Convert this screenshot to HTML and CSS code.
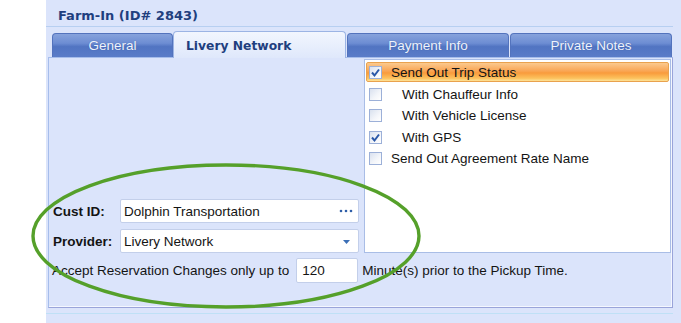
FILE: index.html
```html
<!DOCTYPE html>
<html>
<head>
<meta charset="utf-8">
<link rel="stylesheet" href="styles.css">
</head>
<body>
<div class="frame">
  <div class="title">Farm-In (ID# 2843)</div>
  <div class="tabs">
    <div class="tab tab-general">General</div>
    <div class="tab tab-active">Livery Network</div>
    <div class="tab tab-wide">Payment Info</div>
    <div class="tab tab-wide tab-last">Private Notes</div>
  </div>
  <div class="panel">
    <div class="top">
      <div class="fields">
        <div class="field">
          <span class="label">Cust ID:</span>
          <div class="input">
            <span class="value">Dolphin Transportation</span>
            <svg class="dots" width="14" height="4" viewBox="0 0 14 4"><circle cx="2" cy="2" r="1.3"/><circle cx="7" cy="2" r="1.3"/><circle cx="12" cy="2" r="1.3"/></svg>
          </div>
        </div>
        <div class="field">
          <span class="label">Provider:</span>
          <div class="input">
            <span class="value">Livery Network</span>
            <svg class="arrow" width="7" height="4" viewBox="0 0 7 4"><path d="M0 0H7L3.5 4Z"/></svg>
          </div>
        </div>
      </div>
      <div class="list">
        <div class="row row-sel">
          <span class="cb cb-on"><svg width="11" height="11" viewBox="0 0 11 11"><path d="M2 5.5L4.5 8.5L9 2.5"/></svg></span>
          <span class="txt">Send Out Trip Status</span>
        </div>
        <div class="row">
          <span class="cb"></span>
          <span class="txt indent">With Chauffeur Info</span>
        </div>
        <div class="row">
          <span class="cb"></span>
          <span class="txt indent">With Vehicle License</span>
        </div>
        <div class="row">
          <span class="cb cb-on"><svg width="11" height="11" viewBox="0 0 11 11"><path d="M2 5.5L4.5 8.5L9 2.5"/></svg></span>
          <span class="txt indent">With GPS</span>
        </div>
        <div class="row">
          <span class="cb"></span>
          <span class="txt">Send Out Agreement Rate Name</span>
        </div>
      </div>
    </div>
    <div class="accept">
      <span class="accept-text">Accept Reservation Changes only up to</span>
      <div class="num">120</div>
      <span class="accept-tail">Minute(s) prior to the Pickup Time.</span>
    </div>
  </div>
  <div class="foot"></div>
  <svg class="annot" width="681" height="323" viewBox="0 0 681 323">
    <ellipse cx="226" cy="236" rx="193" ry="71" fill="none" stroke="#55a02a" stroke-width="3.4"/>
  </svg>
</div>
</body>
</html>
```
FILE: styles.css
```css
html, body {
  margin: 0;
  padding: 0;
  background: #ffffff;
}
body {
  width: 681px;
  height: 323px;
  overflow: hidden;
}
.frame {
  position: relative;
  margin-left: 46px;
  width: 635px;
  height: 323px;
  box-sizing: border-box;
  padding: 0 8px 0 2px;
  background: #dbe4fb;
  font-family: "Liberation Sans", Arial, sans-serif;
  font-size: 13.5px;
  color: #141414;
}
.title {
  margin-left: -2px;
  height: 27px;
  box-sizing: border-box;
  border-bottom: 1px solid #b7cff1;
  padding: 6px 0 0 12px;
  line-height: 20px;
  font-family: "DejaVu Sans", sans-serif;
  font-weight: bold;
  font-size: 13px;
  color: #1f3f7f;
}
.tabs {
  display: flex;
  align-items: flex-end;
  height: 26px;
  margin-top: 4px;
  padding-left: 4px;
}
.tab {
  height: 24px;
  box-sizing: border-box;
  border: 1px solid #5373bd;
  border-bottom: none;
  border-radius: 4px 4px 0 0;
  background: linear-gradient(#86a2dc 0%, #6d8dd3 40%, #5174c2 55%, #5a7cc8 100%);
  color: #eef3fd;
  text-align: center;
  line-height: 23px;
  text-shadow: 0 0 1px rgba(40, 70, 140, 0.6);
}
.tab-general {
  width: 121px;
}
.tab-active {
  position: relative;
  z-index: 2;
  width: 173px;
  height: 27px;
  margin-bottom: -1px;
  margin-right: 1px;
  padding-left: 12px;
  text-align: left;
  border-color: #9cb4e4;
  background: linear-gradient(#f2f6fe, #dfe8fb);
  color: #1f3f7f;
  font-family: "DejaVu Sans", sans-serif;
  font-weight: bold;
  font-size: 12.3px;
  line-height: 28px;
  text-shadow: none;
}
.tab-wide {
  width: 162px;
}
.tab-wide + .tab-wide {
  margin-left: 1px;
}
.panel {
  height: 251px;
  box-sizing: border-box;
  border: 1px solid #a6bdeb;
  border-right-color: #9aa4da;
  border-bottom-color: #9aa4da;
  box-shadow: inset -1px -1px 0 #f4f7ff;
}
.top {
  display: flex;
  margin-top: 1px;
  height: 194px;
}
.fields {
  width: 310px;
  box-sizing: border-box;
  padding-left: 4px;
  margin-right: 5px;
  display: flex;
  flex-direction: column;
  justify-content: flex-end;
  gap: 6px;
}
.field {
  display: flex;
  align-items: center;
}
.label {
  width: 67px;
  font-weight: bold;
  color: #141414;
}
.input {
  width: 239px;
  height: 24px;
  box-sizing: border-box;
  border: 1px solid #c3cfea;
  border-radius: 2px;
  background: #ffffff;
  display: flex;
  align-items: center;
  padding: 0 5px 0 3px;
}
.value {
  flex: 1;
}
.dots {
  fill: #2f5ea8;
}
.arrow {
  fill: #3b6fb6;
  margin-right: 3px;
  margin-top: 1px;
}
.list {
  width: 307px;
  height: 194px;
  box-sizing: border-box;
  border: 1px solid #a9bde6;
  background: #ffffff;
  padding: 2px 1px 0 1px;
}
.row {
  height: 21.5px;
  display: flex;
  align-items: center;
  padding-left: 3px;
  box-sizing: border-box;
}
.row-sel {
  height: 20px;
  margin-bottom: 1.5px;
  border: 1px solid #e9a24e;
  border-radius: 2px;
  padding-left: 2px;
  background: linear-gradient(#fbc98e 0%, #f9a553 45%, #f99b3c 55%, #fcc25e 85%, #fde39a 100%);
}
.cb {
  width: 13px;
  height: 13px;
  box-sizing: border-box;
  border: 1px solid #9cb0d8;
  background: linear-gradient(135deg, #d9e1ef 0%, #f4f6fa 60%, #ffffff 100%);
  margin-right: 9px;
  display: flex;
  align-items: center;
  justify-content: center;
}
.cb svg {
  fill: none;
  stroke: #2a58a8;
  stroke-width: 2;
}
.txt {
  color: #141414;
}
.indent {
  padding-left: 11px;
}
.accept {
  display: flex;
  align-items: center;
  margin-top: 5px;
  padding-left: 3px;
}
.num {
  width: 62px;
  height: 25px;
  box-sizing: border-box;
  margin-left: 7px;
  margin-right: 4px;
  border: 1px solid #c3cfea;
  border-radius: 2px;
  background: #ffffff;
  padding-left: 5px;
  line-height: 23px;
}
.foot {
  margin-top: 5px;
  margin-left: -2px;
  border-top: 1px solid #bfe0f6;
}
.annot {
  position: absolute;
  left: -46px;
  top: 0;
  pointer-events: none;
}
```
